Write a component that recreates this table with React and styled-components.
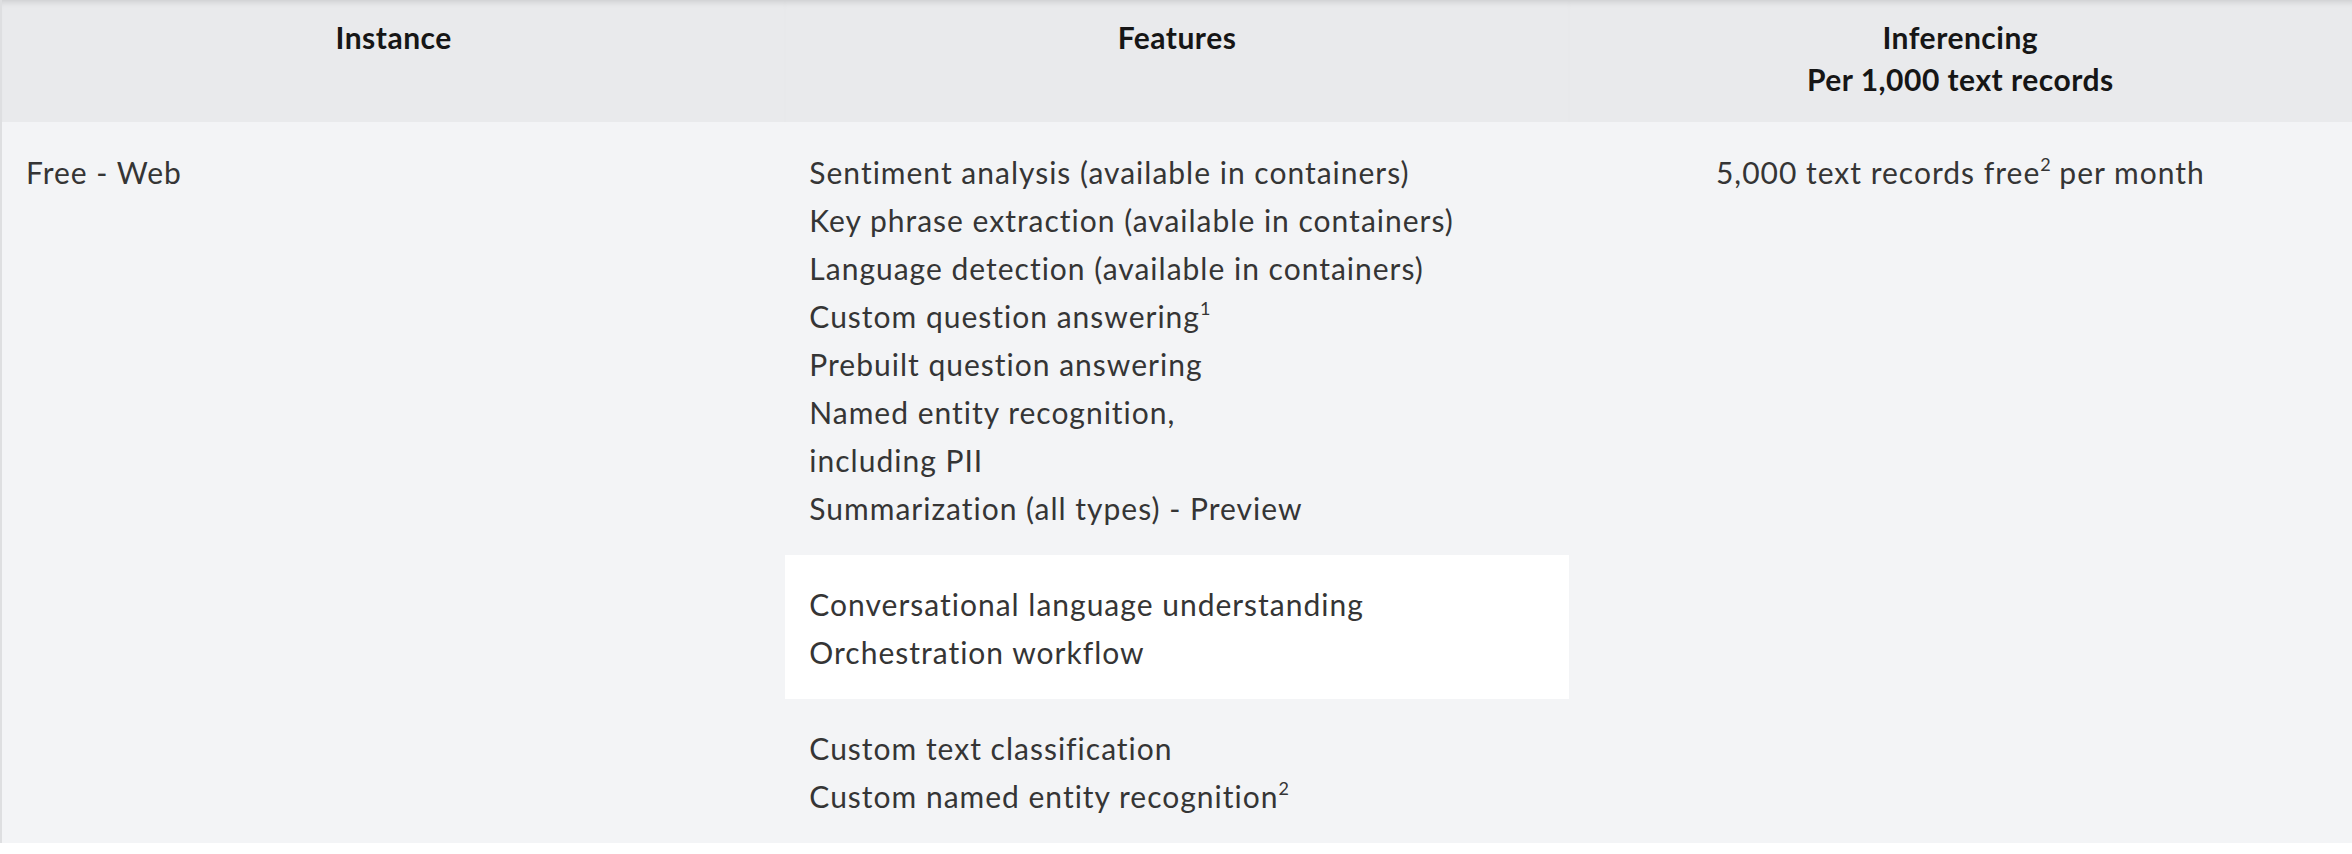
import styled, { createGlobalStyle } from "styled-components";

const GlobalStyle = createGlobalStyle`
  html, body {
    margin: 0;
    padding: 0;
    background: #ffffff;
  }
  body {
    font-family: Lato, "Noto Sans", sans-serif;
    font-variant-ligatures: none;
    color: #353535;
  }
`;

const Table = styled.div`
  display: grid;
  grid-template-columns: repeat(3, 1fr);
  border-left: 2px solid #dedfe1;
  width: 2350px;
`;

const HeadCell = styled.div`
  background: #e9eaec;
  box-shadow: inset 0 7px 6px -5px rgba(0, 0, 0, 0.13);
  height: 122px;
  box-sizing: border-box;
  padding: 16px 24px 0;
  text-align: center;
  font-size: 30px;
  font-weight: 700;
  letter-spacing: 0.5px;
  line-height: 42px;
  color: #161616;
`;

const BodyCell = styled.div`
  background: #f3f4f6;
  font-size: 30px;
  line-height: 48px;
  letter-spacing: 1px;
  text-align: ${({ $align }) => $align || "left"};
  padding: ${({ $flush }) => ($flush ? "0" : "26px 24px 23px")};
`;

const Group = styled.div`
  background: ${({ $white }) => ($white ? "#ffffff" : "transparent")};
  padding: ${({ $first }) => ($first ? "26px" : "25px")} 24px 23px;
`;

const Line = styled.div`
  white-space: nowrap;
`;

const Sup = styled.sup`
  font-size: 0.6em;
  line-height: 0;
  vertical-align: 0.7em;
  letter-spacing: 0;
`;

const groups = [
  {
    white: false,
    items: [
      ["Sentiment analysis (available in containers)"],
      ["Key phrase extraction (available in containers)"],
      ["Language detection (available in containers)"],
      ["Custom question answering", "1"],
      ["Prebuilt question answering"],
      ["Named entity recognition,"],
      ["including PII"],
      ["Summarization (all types) - Preview"],
    ],
  },
  {
    white: true,
    items: [["Conversational language understanding"], ["Orchestration workflow"]],
  },
  {
    white: false,
    items: [["Custom text classification"], ["Custom named entity recognition", "2"]],
  },
];

export default function App() {
  return (
    <>
      <GlobalStyle />
      <Table>
        <HeadCell>Instance</HeadCell>
        <HeadCell>Features</HeadCell>
        <HeadCell>
          Inferencing
          <br />
          Per 1,000 text records
        </HeadCell>

        <BodyCell>Free - Web</BodyCell>
        <BodyCell $flush>
          {groups.map((g, i) => (
            <Group key={i} $white={g.white} $first={i === 0}>
              {g.items.map(([text, note]) => (
                <Line key={text}>
                  {text}
                  {note && <Sup>{note}</Sup>}
                </Line>
              ))}
            </Group>
          ))}
        </BodyCell>
        <BodyCell $align="center">
          5,000 text records free<Sup>2</Sup> per month
        </BodyCell>
      </Table>
    </>
  );
}
